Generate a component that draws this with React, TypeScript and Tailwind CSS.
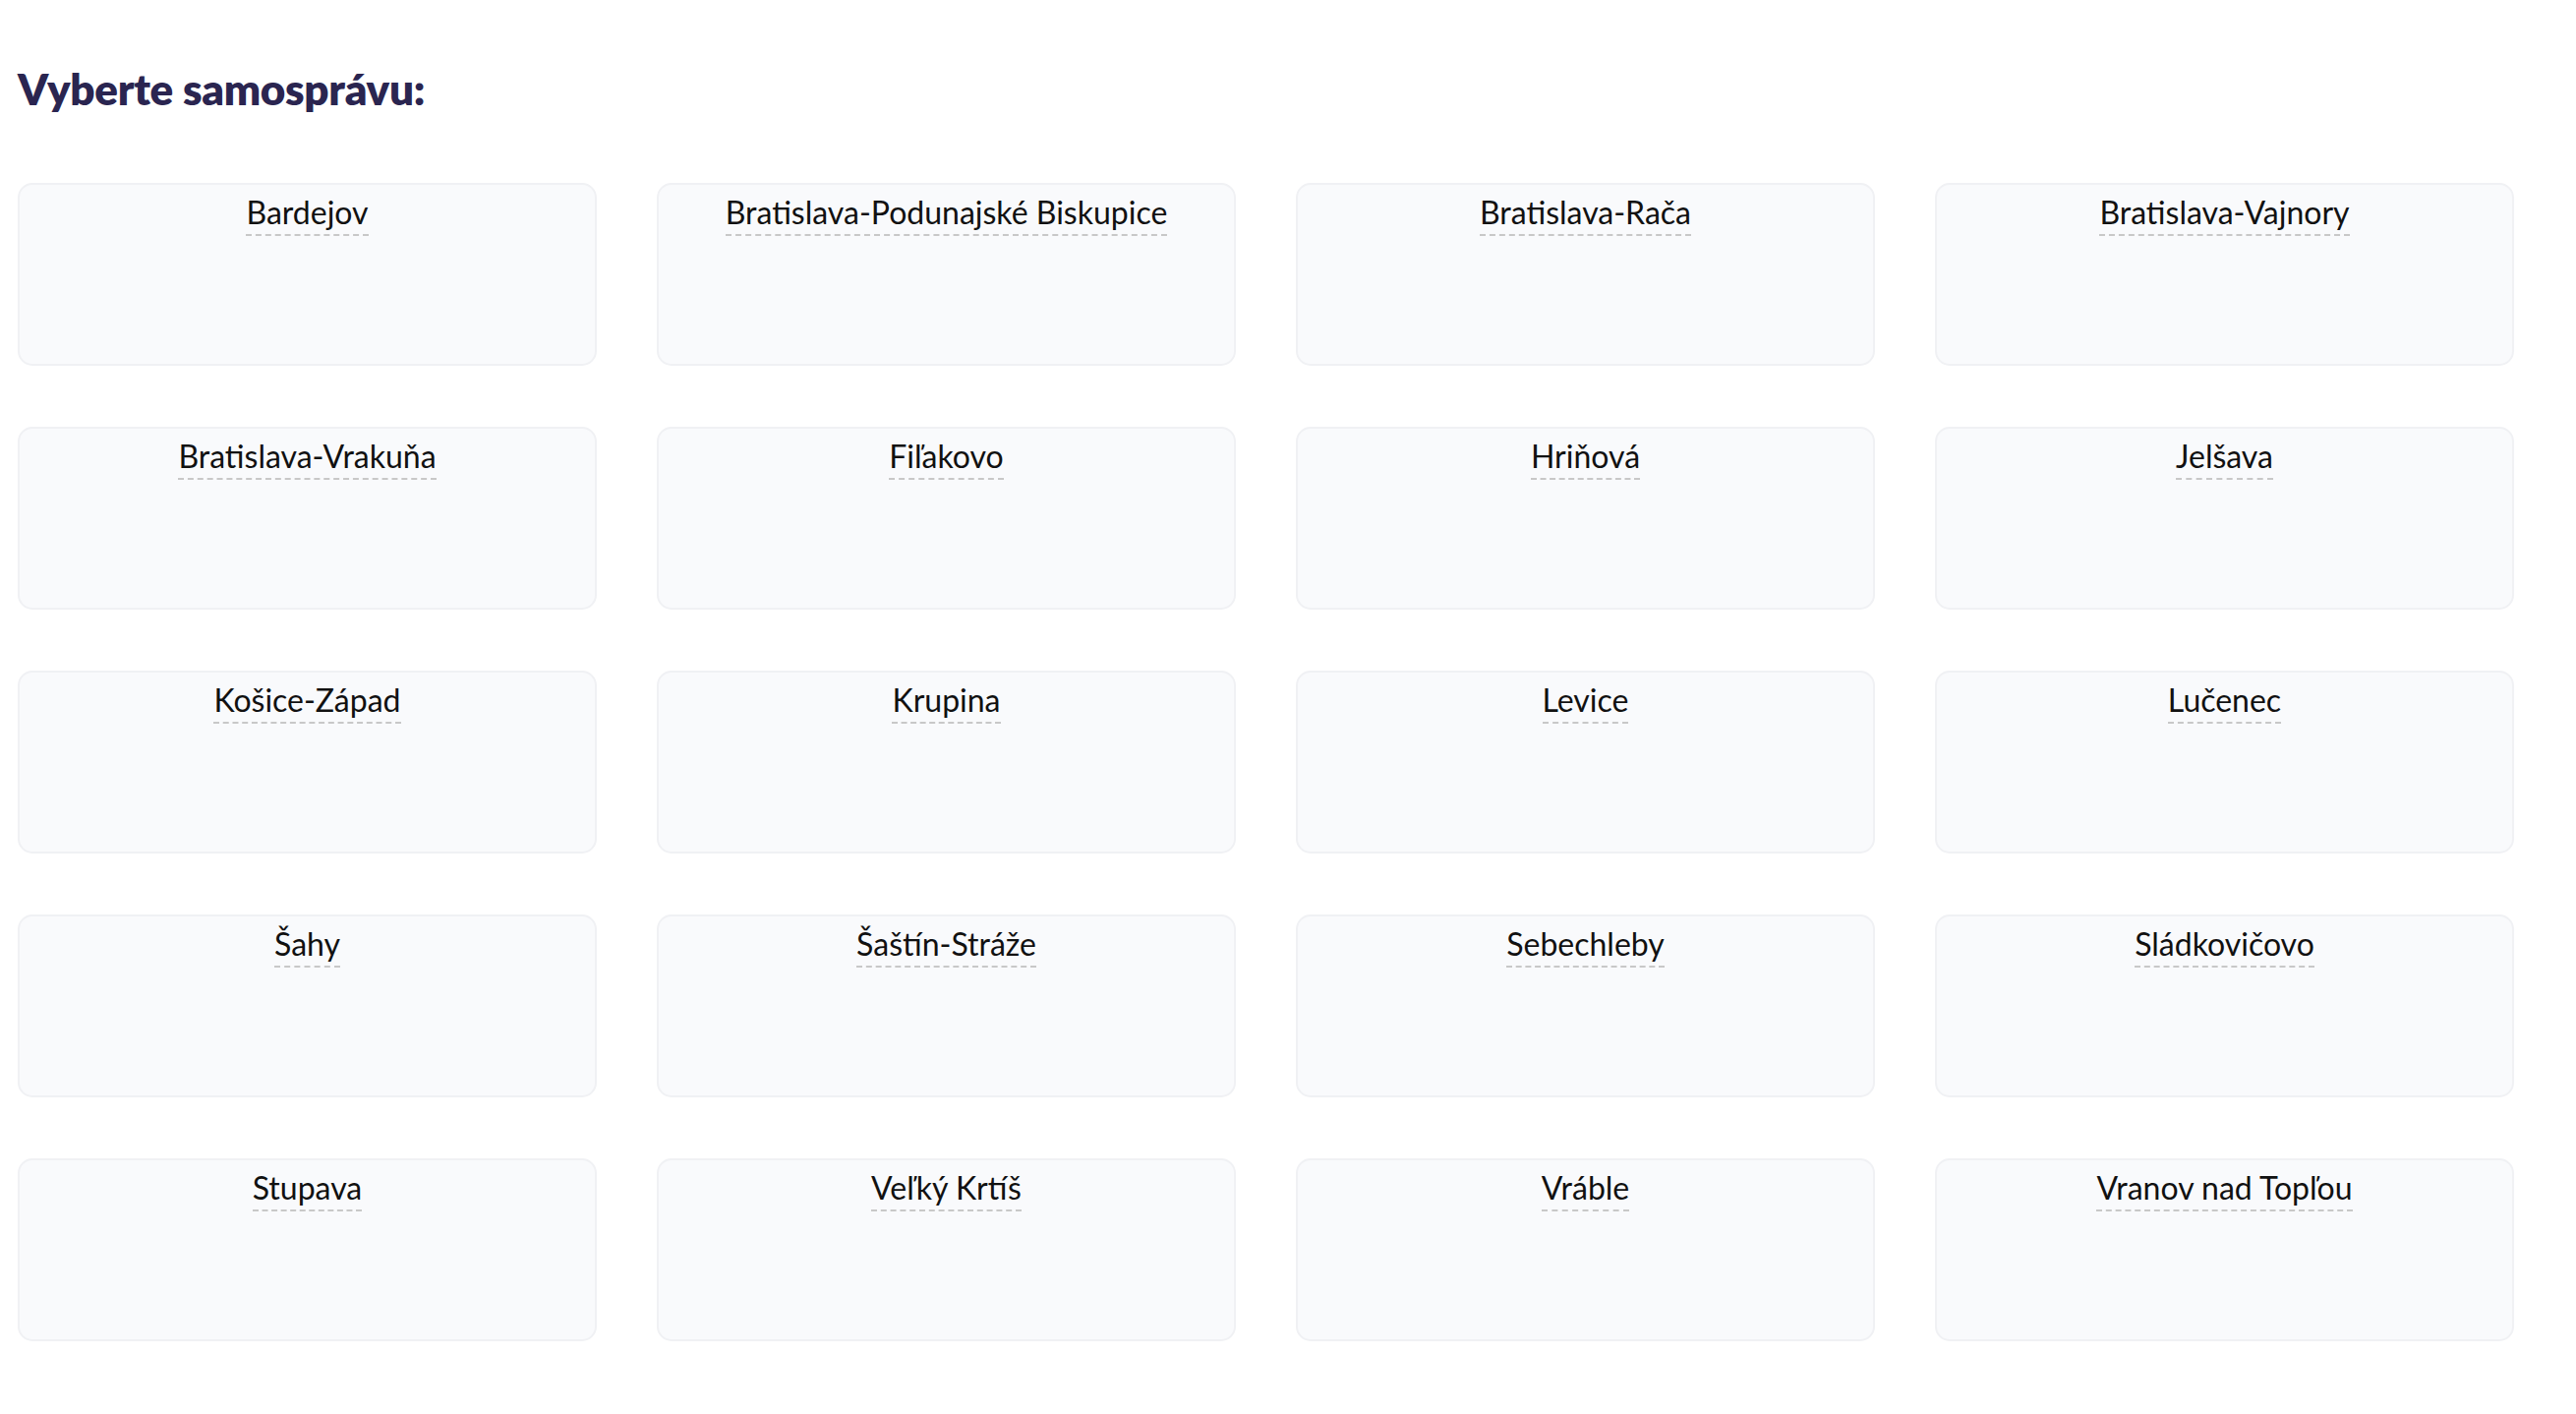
const municipalities = [
  'Bardejov',
  'Bratislava-Podunajské Biskupice',
  'Bratislava-Rača',
  'Bratislava-Vajnory',
  'Bratislava-Vrakuňa',
  'Fiľakovo',
  'Hriňová',
  'Jelšava',
  'Košice-Západ',
  'Krupina',
  'Levice',
  'Lučenec',
  'Šahy',
  'Šaštín-Stráže',
  'Sebechleby',
  'Sládkovičovo',
  'Stupava',
  'Veľký Krtíš',
  'Vráble',
  'Vranov nad Topľou',
]

function MunicipalityCard({ name }: { name: string }) {
  return (
    <a
      href="#"
      className="flex h-[186px] flex-col items-center rounded-[15px] border-2 border-[#f0f1f4] bg-[#f9fafc] pt-[5px]"
    >
      <span className="border-b-2 border-dashed border-[#c8c8c8] text-[32px] leading-[45px] text-[#111]">
        {name}
      </span>
    </a>
  )
}

export default function App() {
  return (
    <div className="min-h-screen bg-white pl-[18px] pt-[61px] font-['Lato','Liberation_Sans',sans-serif]">
      <h1 className="text-[44px] font-extrabold leading-[58px] tracking-[-0.3px] text-[#2a2550]">
        Vyberte samosprávu:
      </h1>
      <div className="mt-[67px] grid grid-cols-[repeat(4,589px)] gap-x-[61px] gap-y-[62px]">
        {municipalities.map((name) => (
          <MunicipalityCard key={name} name={name} />
        ))}
      </div>
    </div>
  )
}
